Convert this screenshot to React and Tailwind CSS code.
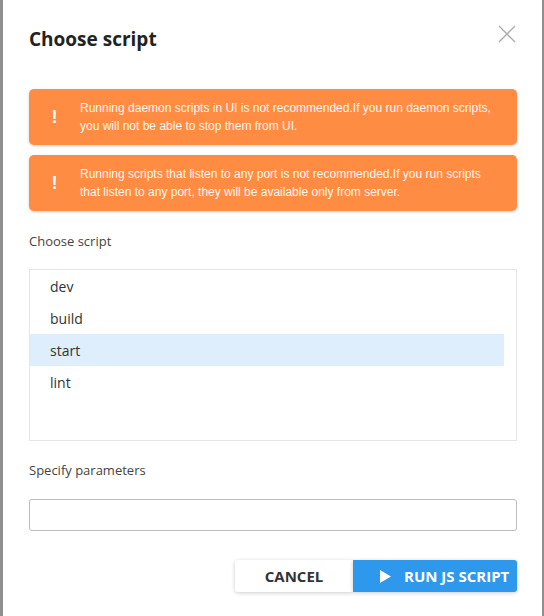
import React, { useState } from 'react';

const scripts = ['dev', 'build', 'start', 'lint'];

const warnings = [
    'Running daemon scripts in UI is not recommended.If you run daemon scripts, you will not be able to stop them from UI.',
    'Running scripts that listen to any port is not recommended.If you run scripts that listen to any port, they will be available only from server.',
];

function Warning({ text }) {
    return (
        <div className="flex items-center h-[56px] rounded-[5px] bg-[#ff8c42] shadow-[0_1px_3px_rgba(0,0,0,0.18)] text-white">
            <span className="w-[51px] shrink-0 text-center text-[18px] font-bold font-['Liberation_Sans',sans-serif]">!</span>
            <p className="pr-5 text-[12px] leading-[18px] font-['Liberation_Sans',sans-serif] text-[#fff6ef]">{text}</p>
        </div>
    );
}

export default function App() {
    const [selected, setSelected] = useState('start');
    const [params, setParams] = useState('');

    return (
        <div className="flex h-[616px] w-[544px] bg-[#8f8f8f] font-['Open_Sans',sans-serif]">
            <div className="ml-[3px] w-[539px] bg-white pl-[26px] pr-[25px] pt-[24px]">
                {/* header */}
                <div className="flex items-start justify-between">
                    <h2 className="mt-[1px] text-[19px] font-bold leading-[28px] text-[#222]">Choose script</h2>
                    <button className="mr-[1px] mt-[1px] text-[#aaa]">
                        <svg width="18" height="18" viewBox="0 0 18 18" fill="none" stroke="currentColor" strokeWidth="1.3">
                            <path d="M1 1 L17 17 M17 1 L1 17" />
                        </svg>
                    </button>
                </div>

                {/* warnings */}
                <div className="mt-[36px] flex flex-col gap-[10px]">
                    {warnings.map((w) => <Warning key={w} text={w} />)}
                </div>

                <p className="mt-[21px] text-[13px] leading-[18px] text-[#444]">Choose script</p>

                {/* script list */}
                <div className="mt-[19px] h-[172px] border border-[#e6e6e6] pr-[12px]">
                    {scripts.map((s) => (
                        <div
                            key={s}
                            onClick={() => setSelected(s)}
                            className={`flex h-[32px] items-center pl-[20px] text-[14px] text-[#333] cursor-pointer ${selected === s ? 'bg-[#dfeefc]' : ''}`}
                        >
                            {s}
                        </div>
                    ))}
                </div>

                <p className="mt-[20px] text-[13px] leading-[18px] text-[#444]">Specify parameters</p>

                <input
                    value={params}
                    onChange={(e) => setParams(e.target.value)}
                    className="mt-[20px] block h-[32px] w-full rounded-[3px] border border-[#bdbdbd] px-2 text-[14px] outline-none"
                />

                {/* actions */}
                <div className="mt-[29px] flex justify-end">
                    <button className="h-[32px] w-[118px] rounded-l-[3px] bg-white text-[15px] font-bold text-[#333] shadow-[0_1px_4px_rgba(0,0,0,0.2)]">
                        CANCEL
                    </button>
                    <button className="flex h-[32px] w-[164px] items-center gap-[13px] rounded-r-[3px] bg-[#2d98ec] pl-[27px] text-[15px] font-bold text-white shadow-[0_1px_4px_rgba(0,0,0,0.2)]">
                        <svg width="11" height="13" viewBox="0 0 11 13" fill="currentColor">
                            <path d="M0 0 L11 6.5 L0 13 Z" />
                        </svg>
                        RUN JS SCRIPT
                    </button>
                </div>
            </div>
        </div>
    );
}
